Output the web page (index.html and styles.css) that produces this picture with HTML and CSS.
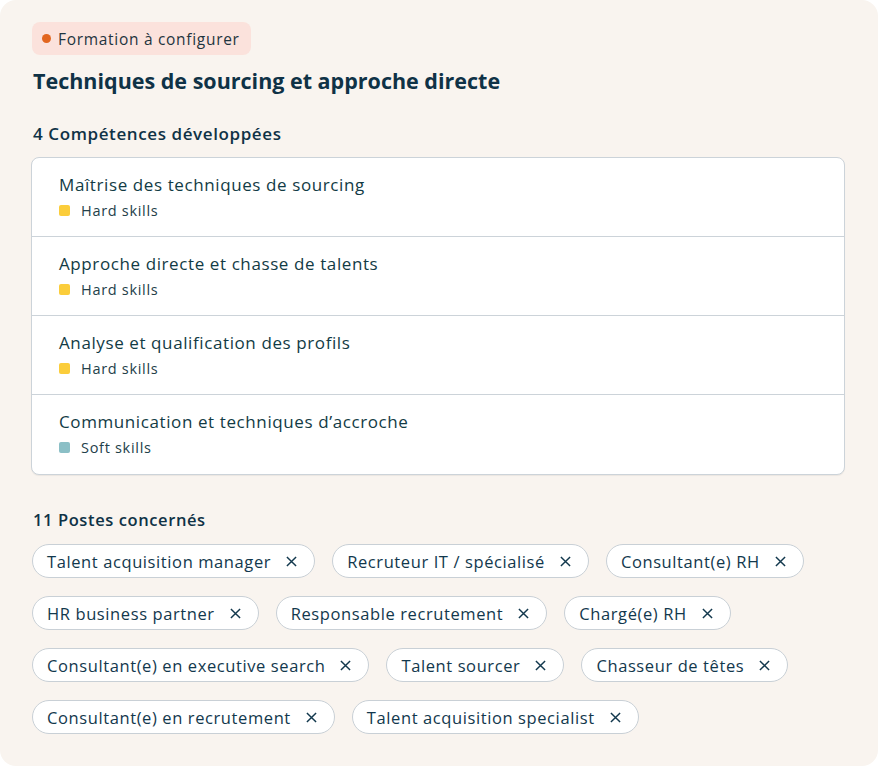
FILE: index.html
```html
<!DOCTYPE html>
<html>
<head>
    <title>Formation à configurer</title>
    <link rel="stylesheet" href="styles.css">
</head>
<body>
    <div class="panel">
        <span class="status"><span class="status-dot"></span>Formation à configurer</span>
        <h1 class="title">Techniques de sourcing et approche directe</h1>

        <h2 class="section-title">4 Compétences développées</h2>
        <div class="skills">
            <div class="skill">
                <div class="skill-name">Maîtrise des techniques de sourcing</div>
                <div class="skill-type"><span class="swatch hard"></span>Hard skills</div>
            </div>
            <div class="skill">
                <div class="skill-name">Approche directe et chasse de talents</div>
                <div class="skill-type"><span class="swatch hard"></span>Hard skills</div>
            </div>
            <div class="skill">
                <div class="skill-name">Analyse et qualification des profils</div>
                <div class="skill-type"><span class="swatch hard"></span>Hard skills</div>
            </div>
            <div class="skill">
                <div class="skill-name">Communication et techniques d’accroche</div>
                <div class="skill-type"><span class="swatch soft"></span>Soft skills</div>
            </div>
        </div>

        <h2 class="section-title jobs-title">11 Postes concernés</h2>
        <div class="tags">
            <span class="tag">Talent acquisition manager<svg class="tag-x" viewBox="0 0 12 12"><path d="M1 1L11 11M11 1L1 11"/></svg></span>
            <span class="tag">Recruteur IT / spécialisé<svg class="tag-x" viewBox="0 0 12 12"><path d="M1 1L11 11M11 1L1 11"/></svg></span>
            <span class="tag">Consultant(e) RH<svg class="tag-x" viewBox="0 0 12 12"><path d="M1 1L11 11M11 1L1 11"/></svg></span>
            <span class="tag">HR business partner<svg class="tag-x" viewBox="0 0 12 12"><path d="M1 1L11 11M11 1L1 11"/></svg></span>
            <span class="tag">Responsable recrutement<svg class="tag-x" viewBox="0 0 12 12"><path d="M1 1L11 11M11 1L1 11"/></svg></span>
            <span class="tag">Chargé(e) RH<svg class="tag-x" viewBox="0 0 12 12"><path d="M1 1L11 11M11 1L1 11"/></svg></span>
            <span class="tag">Consultant(e) en executive search<svg class="tag-x" viewBox="0 0 12 12"><path d="M1 1L11 11M11 1L1 11"/></svg></span>
            <span class="tag">Talent sourcer<svg class="tag-x" viewBox="0 0 12 12"><path d="M1 1L11 11M11 1L1 11"/></svg></span>
            <span class="tag">Chasseur de têtes<svg class="tag-x" viewBox="0 0 12 12"><path d="M1 1L11 11M11 1L1 11"/></svg></span>
            <span class="tag">Consultant(e) en recrutement<svg class="tag-x" viewBox="0 0 12 12"><path d="M1 1L11 11M11 1L1 11"/></svg></span>
            <span class="tag">Talent acquisition specialist<svg class="tag-x" viewBox="0 0 12 12"><path d="M1 1L11 11M11 1L1 11"/></svg></span>
        </div>
    </div>
</body>
</html>
```

FILE: styles.css
```css
body {
    margin: 0;
    background-color: #fff;
    font-family: "Open Sans", sans-serif;
    color: #12384d;
}
.panel {
    background-color: #f9f4ef;
    border-radius: 16px;
    min-height: 766px;
    box-sizing: border-box;
    padding: 22px 33px 20px 32px;
}
.status {
    display: inline-flex;
    align-items: center;
    gap: 7px;
    height: 33px;
    padding: 0 11px 0 10px;
    background-color: #fbe2dc;
    border-radius: 8px;
    font-size: 15.5px;
    letter-spacing: 0.7px;
    color: #1f3540;
}
.status-dot {
    width: 9px;
    height: 9px;
    border-radius: 50%;
    background-color: #e2661f;
}
.title {
    margin: 11px 0 0 1px;
    font-size: 21.5px;
    font-weight: 700;
    color: #0f3246;
}
.section-title {
    margin: 27px 0 12px 1px;
    font-size: 17px;
    font-weight: 600;
    letter-spacing: 0.6px;
    color: #0f3246;
}
.skills {
    margin-left: -1px;
    background-color: #fff;
    border: 1px solid #ccd3d9;
    border-radius: 8px;
    box-shadow: 0 1px 1px rgba(0, 0, 0, 0.06);
}
.skill {
    height: 79px;
    padding: 15px 27px 0;
    box-sizing: border-box;
    border-bottom: 1px solid #ccd3d9;
}
.skill:last-child {
    border-bottom: none;
}
.skill-name {
    font-size: 17px;
    letter-spacing: 0.6px;
    color: #123b45;
}
.skill-type {
    display: flex;
    align-items: center;
    gap: 11px;
    margin-top: 5px;
    font-size: 14.5px;
    letter-spacing: 0.7px;
    color: #23404a;
}
.swatch {
    width: 11px;
    height: 11px;
    border-radius: 2px;
}
.hard {
    background-color: #fbcd3b;
}
.soft {
    background-color: #8bbfc6;
}
.jobs-title {
    margin-top: 33px;
    margin-bottom: 13px;
    font-size: 16.5px;
}
.tags {
    display: flex;
    flex-wrap: wrap;
    gap: 18px 17px;
    margin-right: 40px;
}
.tag {
    display: inline-flex;
    align-items: center;
    height: 34px;
    box-sizing: border-box;
    padding: 0 17px 0 14px;
    background-color: #fff;
    border: 1px solid #c9d0d6;
    border-radius: 17px;
    font-size: 16.5px;
    letter-spacing: 0.6px;
    color: #12384d;
}
.tag-x {
    width: 11px;
    height: 11px;
    margin-left: 15px;
    fill: none;
    stroke: #12384d;
    stroke-width: 1.6;
}
```
